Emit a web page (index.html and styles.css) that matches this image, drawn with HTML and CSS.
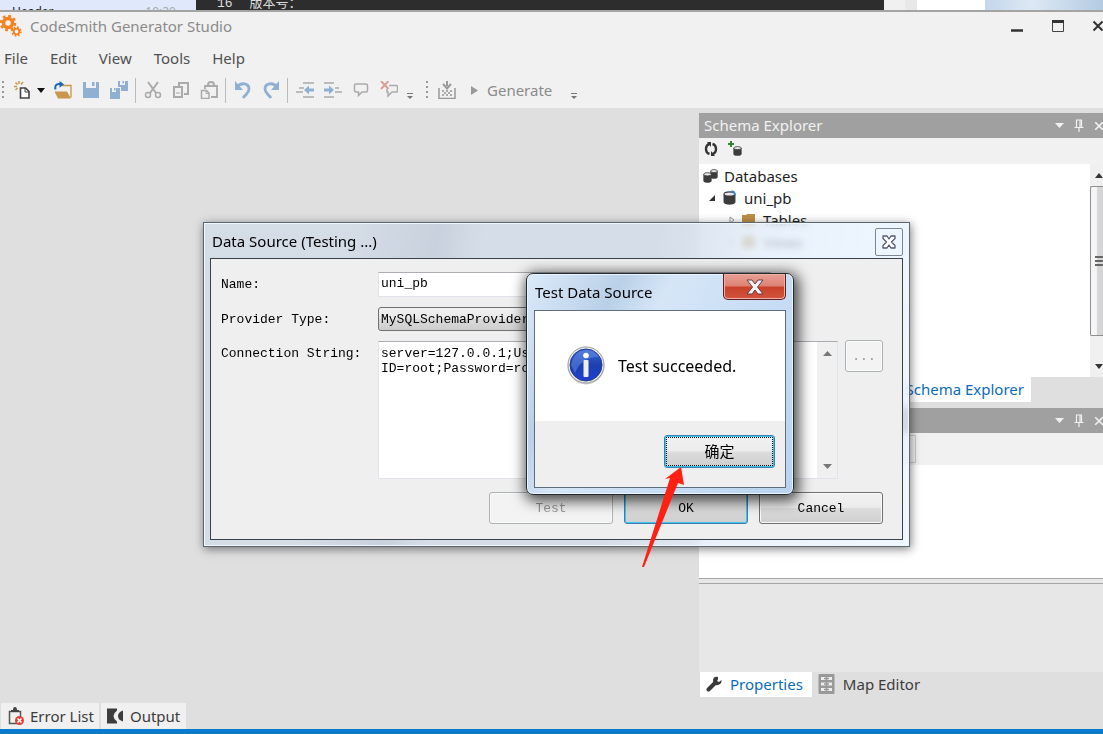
FILE: index.html
```html
<!DOCTYPE html>
<html lang="en">
<head>
<meta charset="utf-8">
<title>CodeSmith Generator Studio</title>
<link rel="stylesheet" href="styles.css">
</head>
<body>
<svg class="defs" aria-hidden="true">
  <symbol id="pin" viewBox="0 0 10 14"><path d="M2.500 1v7M2 1h6M6 1v7M7.500 1v7M0.500 8.500h9M5 9v4" fill="none" stroke="currentColor" stroke-width="1.200"/></symbol>
  <symbol id="cross" viewBox="0 0 12 12"><path d="M1.500 1.500l9 9M10.500 1.500l-9 9" fill="none" stroke="currentColor" stroke-width="2"/></symbol>
  <symbol id="drum" viewBox="0 0 12 12" preserveAspectRatio="none"><path d="M0.500 2.500v7c0 3 11 3 11 0v-7z" fill="#3c3c3c"/><ellipse cx="6" cy="2.500" rx="5" ry="1.800" fill="#e8e8e8" stroke="#3c3c3c"/></symbol>
  <symbol id="more" viewBox="0 0 8 8"><path d="M1 1.500h6" stroke="#777"/><path d="M1 4h6l-3 3z" fill="#777"/></symbol>
</svg>

<div class="backdrop">
  <div class="back-list"><span>Header</span><span class="back-time">10:20</span></div>
  <div class="back-code"><span class="line-no">16</span><span>版本号：</span></div>
  <div class="back-light"></div><div class="back-mid"></div><div class="back-white"></div><div class="back-glass"></div>
</div>

<header class="titlebar">
  <svg class="logo" viewBox="0 0 22 22">
    <g fill="none" stroke="#f5821f"><circle cx="8" cy="8" r="4.500" stroke-width="3.500"/><circle cx="8" cy="8" r="7" stroke-width="2.600" stroke-dasharray="2.750 2.750"/><circle cx="16.500" cy="16.500" r="2.800" stroke-width="1.800"/><circle cx="16.500" cy="16.500" r="4.300" stroke-width="1.800" stroke-dasharray="1.700 1.680"/></g>
  </svg>
  <h1>CodeSmith Generator Studio</h1>
  <div class="win-controls">
    <button aria-label="Minimize"><svg viewBox="0 0 14 14" width="14" height="14"><path d="M1 11.500h12" stroke="#333" stroke-width="2.500"/></svg></button>
    <button aria-label="Maximize"><svg viewBox="0 0 14 14" width="14" height="14"><path d="M1.500 1.500h11v11h-11z" fill="none" stroke="#444"/><path d="M1 2.500h12" stroke="#333" stroke-width="3"/></svg></button>
    <button aria-label="Close"><svg width="12" height="12" color="#333"><use href="#cross"/></svg></button>
  </div>
</header>

<nav class="menu">
  <button>File</button><button>Edit</button><button>View</button><button>Tools</button><button>Help</button>
</nav>

<div class="toolbar">
  <span class="grip first"></span>
  <button class="tool" aria-label="New"><svg viewBox="0 0 18 18"><path d="M6.500 7h5l3.500 3.500v6.500h-8.500z" fill="#fff" stroke="#444" stroke-width="1.600"/><path d="M11 7v4h4" fill="none" stroke="#444"/><path d="M5 0v3M1.500 1.500l2 2M0 5.500h3M9 1l-2 2.500M1.500 9l2-2" stroke="#c8964c" stroke-width="1.500"/></svg></button>
  <button class="drop" aria-label="New options"><svg viewBox="0 0 8 5" width="8" height="5"><path d="M0 0h8L4 5z" fill="#111"/></svg></button>
  <button class="tool" aria-label="Open"><svg viewBox="0 0 18 18"><path d="M8 4.500h9v12" fill="none" stroke="#c8964c" stroke-width="1.300"/><path d="M0.500 10.500h12.500l4 7h-13z" fill="#c8964c"/><path d="M1.500 8.500C0.500 3.500 3 2.500 7 3" fill="none" stroke="#1b66b0" stroke-width="2"/><path d="M5.500 0l4.500 3.200-4.500 3.500z" fill="#1b66b0"/></svg></button>
  <button class="tool" aria-label="Save"><svg viewBox="0 0 18 18"><path d="M1 1h3v6h10V1h3v16H1z" fill="#8fb0d0"/><path d="M5 1h8v5H5z" fill="#eef2f6"/><path d="M10 1h2.500v4H10z" fill="#8fb0d0"/></svg></button>
  <button class="tool" aria-label="Save all"><svg viewBox="0 0 18 18" fill="#8fb0d0"><path d="M8 0h2v4h5V0h3v10h-7V6H8z"/><path d="M12.500 0h1.500v2.500h-1.500z"/><path d="M0 7h2v4h4V7h4v11H0z"/><path d="M4 7h1.500v2.500H4z"/></svg></button>
  <span class="sep"></span>
  <button class="tool" aria-label="Cut"><svg viewBox="0 0 18 18" fill="none" stroke="#aaa"><path d="M4 1l8 11M14 1L6 12" stroke-width="2"/><circle cx="4" cy="14" r="2.500" stroke-width="1.500"/><circle cx="14" cy="14" r="2.500" stroke-width="1.500"/></svg></button>
  <button class="tool" aria-label="Copy"><svg viewBox="0 0 18 18" fill="none" stroke="#aaa" stroke-width="2"><path d="M7 5V2h9v11h-4"/><path d="M2 6h8v10H2z"/><path d="M4 12h4" stroke-width="1"/></svg></button>
  <button class="tool" aria-label="Paste"><svg viewBox="0 0 18 18" fill="none" stroke="#aaa"><path d="M5 8V5h12v11h-6" stroke-width="1.800"/><path d="M8 4c0-4 6-4 6 0" stroke-width="2"/><path d="M1.500 9.500h5L9 12v5.500H1.500z" stroke-width="1.500"/><path d="M6 9v3.500h3"/></svg></button>
  <span class="sep"></span>
  <button class="tool" aria-label="Undo"><svg viewBox="0 0 18 18"><path d="M3 6C7 1 15 2 15 8c0 4-3 5-6 9" fill="none" stroke="#8fb0d0" stroke-width="2.800"/><path d="M1 0v9h8z" fill="#8fb0d0"/></svg></button>
  <button class="tool" aria-label="Redo"><svg viewBox="0 0 18 18"><path d="M15 6C11 1 3 2 3 8c0 4 3 5 6 9" fill="none" stroke="#8fb0d0" stroke-width="2.800"/><path d="M17 0v9H9z" fill="#8fb0d0"/></svg></button>
  <span class="sep"></span>
  <button class="tool" aria-label="Outdent"><svg viewBox="0 0 18 18"><path d="M7 2h11M7 16h11M3 7h5M0 11h7" stroke="#aaa" stroke-width="1.700"/><path d="M8 9l5-4.500v3h5v3h-5v3z" fill="#8fb0d0"/></svg></button>
  <button class="tool" aria-label="Indent"><svg viewBox="0 0 18 18"><path d="M0 2h10M0 16h10M11 7h4M11 11h7" stroke="#aaa" stroke-width="1.700"/><path d="M10 9L5 4.500v3H0v3h5v3z" fill="#8fb0d0"/></svg></button>
  <button class="tool" aria-label="Comment"><svg viewBox="0 0 18 18"><path d="M4 3h10q1.500 0 1.500 1.500v5q0 1.500-1.500 1.500H10l-3.500 3.500V11H4Q2.500 11 2.500 9.500v-5Q2.500 3 4 3z" fill="none" stroke="#aaa" stroke-width="1.500"/></svg></button>
  <button class="tool" aria-label="Remove comment"><svg viewBox="0 0 18 18"><path d="M9 4.500h7.500q1 0 1 1v4.500q0 1-1 1H12l-4 4V11H7V8" fill="none" stroke="#aaa" stroke-width="1.500"/><path d="M1 0l7.500 8M8.500 0L1 8" stroke="#dc9e94" stroke-width="2"/></svg></button>
  <button class="overflow" aria-label="More edit tools"><svg width="8" height="8"><use href="#more"/></svg></button>
  <span class="grip"></span>
  <button class="tool" aria-label="Build"><svg viewBox="0 0 18 18"><path d="M1 7v10.500h16V7" fill="none" stroke="#999" stroke-width="1.500"/><path d="M9 0v5M5 3l4 4.500L13 3" fill="none" stroke="#999" stroke-width="2"/><path d="M4 10h2m2 0h2m2 0h2M6 12h2m2 0h2M4 14h2m2 0h2m2 0h2" stroke="#aaa" stroke-width="2"/></svg></button>
  <button class="generate"><svg viewBox="0 0 7 9" width="7" height="9"><path d="M0 0l7 4.500L0 9z" fill="#999"/></svg>Generate</button>
  <button class="overflow" aria-label="More build tools"><svg width="8" height="8"><use href="#more"/></svg></button>
</div>

<main class="workspace">
  <div class="canvas"></div>
  <aside class="dock">
    <section class="panel schema">
      <header class="panel-head"><h2>Schema Explorer</h2>
        <button aria-label="Panel menu"><svg viewBox="0 0 9 5" width="9" height="5"><path d="M0 0h9L4.500 5z" fill="currentColor"/></svg></button>
        <button aria-label="Pin"><svg width="10" height="14"><use href="#pin"/></svg></button>
        <button aria-label="Close panel"><svg width="10" height="10"><use href="#cross"/></svg></button>
      </header>
      <div class="panel-tools">
        <button aria-label="Refresh"><svg viewBox="0 0 14 14" width="14" height="14"><path d="M5.500 12Q2 11 2 7t3.500-5M8.500 2Q12 3 12 7t-3.500 5" fill="none" stroke="#333" stroke-width="2.400"/><path d="M3 0h4v5zM11 14H7V9z" fill="#333"/></svg></button>
        <button aria-label="Add data source"><svg viewBox="0 0 16 16" width="16" height="16"><path d="M4 0v6M1 3h6" stroke="#2c8a35" stroke-width="2"/><use href="#drum" x="6" y="5" width="9" height="10"/></svg></button>
      </div>
      <div class="tree-area">
        <ul class="tree">
          <li><svg viewBox="0 0 16 16" width="16" height="16"><use href="#drum" x="7" y="1" width="8" height="10"/><use href="#drum" x="0" y="4" width="9" height="11"/></svg>Databases</li>
          <li class="l1"><svg viewBox="0 0 8 8" width="8" height="8"><path d="M7 1v6H1z" fill="#333"/></svg><svg viewBox="0 0 16 16" width="16" height="16"><use href="#drum" x="1" y="1" width="13" height="14"/><path d="M9 2q3-2 4 3" fill="none" stroke="#3b83cc" stroke-width="2"/></svg>uni_pb</li>
          <li class="l2"><svg viewBox="0 0 6 8" width="6" height="8"><path d="M1 1l4 3-4 3z" fill="none" stroke="#999"/></svg><svg viewBox="0 0 16 16" width="16" height="16"><path d="M1 3h4l1-1h8v12H1z" fill="#be8f47"/></svg>Tables</li>
          <li class="l2"><svg viewBox="0 0 6 8" width="6" height="8"><path d="M1 1l4 3-4 3z" fill="none" stroke="#999"/></svg><svg viewBox="0 0 16 16" width="16" height="16"><path d="M1 3h4l1-1h8v12H1z" fill="#be8f47"/></svg>Views</li>
        </ul>
        <div class="tree-scroll">
          <svg viewBox="0 0 8 5" width="8" height="5"><path d="M0 5h8L4 0z" fill="#333"/></svg>
          <div class="thumb"><i></i><i></i><i></i></div>
          <svg viewBox="0 0 8 5" width="8" height="5"><path d="M0 0h8L4 5z" fill="#333"/></svg>
        </div>
      </div>
      <div class="tabs schema-tabs"><button class="tab active">Schema Explorer</button></div>
    </section>
    <section class="panel props">
      <header class="panel-head"><h2></h2>
        <button aria-label="Panel menu"><svg viewBox="0 0 9 5" width="9" height="5"><path d="M0 0h9L4.500 5z" fill="currentColor"/></svg></button>
        <button aria-label="Pin"><svg width="10" height="14"><use href="#pin"/></svg></button>
        <button aria-label="Close panel"><svg width="10" height="10"><use href="#cross"/></svg></button>
      </header>
      <div class="prop-tools"><div class="prop-box"></div></div>
      <div class="prop-grid"></div>
      <div class="prop-split"></div>
      <div class="prop-help"></div>
      <div class="tabs">
        <button class="tab active"><svg viewBox="0 0 16 16" width="16" height="16"><path d="M2.500 13.500L9 7" stroke="#3a3a3a" stroke-width="4" stroke-linecap="round"/><path d="M12 3.500V1Q7 0 7 5q1 5 5 4 4-1 3.500-5L13 6 11 5z" fill="#3a3a3a"/></svg>Properties</button>
        <button class="tab"><svg viewBox="0 0 17 20" width="17" height="20"><rect x="0.500" width="16" height="20" rx="1" fill="#999"/><path d="M3 3h11v3H3zM3 8.500h11v3H3zM3 14h11v3H3z" fill="#eee"/><path d="M6 4.500h5M6 10h5M6 15.500h5M8.500 3v14" stroke="#999" stroke-width="1.500"/></svg>Map Editor</button>
      </div>
    </section>
  </aside>
</main>

<footer class="bottom-tabs">
  <button><svg viewBox="0 0 16 18" width="16" height="18"><path d="M1.500 4.500h11v12h-11z" fill="none" stroke="#555" stroke-width="1.500"/><path d="M3 5V3h2q0-3 2-3t2 3h2v2z" fill="#444"/><circle cx="11.500" cy="13.500" r="4.500" fill="#dc4236"/><path d="M9.500 11.500l4 4m0-4l-4 4" stroke="#fff" stroke-width="1.500"/></svg>Error List</button>
  <button><svg viewBox="0 0 18 16" width="18" height="16"><path d="M1 0.500h10v2Q4 8 11 13.500v2H1z" fill="#3d3d3d"/><path d="M17 2.500v11Q12 12 12 8t5-5.500z" fill="#3d3d3d"/></svg>Output</button>
</footer>

<section class="source-dialog" role="dialog" aria-labelledby="source-title">
  <header><h2 id="source-title">Data Source (Testing ...)</h2>
    <button aria-label="Close data source"><svg viewBox="0 0 14 14" width="14" height="14"><path d="M1 1h4l2 3 2-3h4v2.500L9.500 7l3.500 3.500V13H9l-2-3-2 3H1v-2.500L4.500 7 1 3.500z" fill="#fff" stroke="#555970" stroke-width="1.300" stroke-linejoin="round"/></svg></button></header>
  <form class="source-form">
    <label for="name">Name:</label><input id="name" type="text" value="uni_pb">
    <label for="provider">Provider Type:</label><select id="provider"><option>MySQLSchemaProvider</option></select>
    <label for="connection">Connection String:</label>
    <div class="connection">
      <div class="text-wrap"><textarea id="connection" spellcheck="false">server=127.0.0.1;User
ID=root;Password=root</textarea>
        <div class="text-scroll"><svg viewBox="0 0 9 5" width="9" height="5"><path d="M0 5h9L4.500 0z" fill="#777"/></svg><svg viewBox="0 0 9 5" width="9" height="5"><path d="M0 0h9L4.500 5z" fill="#777"/></svg></div></div>
      <button type="button" class="browse" disabled>...</button>
    </div>
    <div class="actions"><button type="button" disabled>Test</button><button type="button" class="default">OK</button><button type="button">Cancel</button></div>
  </form>
</section>

<section class="message-dialog" role="alertdialog" aria-labelledby="message-title">
  <header><h2 id="message-title">Test Data Source</h2>
    <button aria-label="Close message"><svg viewBox="0 0 18 16" width="18" height="16"><path d="M1 1h5l3 4 3-4h5l-5.500 7L17 15h-5l-3-4-3 4H1l5.500-7z" fill="#f4f4f4" stroke="#6b3d42" stroke-linejoin="round"/></svg></button></header>
  <div class="message-body">
    <div class="message-text">
      <svg viewBox="0 0 40 40" width="40" height="40"><defs><linearGradient id="blue" x2="0" y2="1"><stop stop-color="#3a68d8"/><stop offset=".5" stop-color="#1c40ae"/><stop offset="1" stop-color="#1f3fd0"/></linearGradient></defs><circle cx="20" cy="20" r="18.500" fill="#999" opacity=".5"/><circle cx="20" cy="19" r="18" fill="#eee" stroke="#9a9a9a"/><circle cx="20" cy="19" r="16" fill="url(#blue)" stroke="#223a90"/><path d="M5 19Q8 5 20 4q9 0 13 7-18 0-24 16z" fill="#6f97ee" opacity=".45"/><circle cx="20" cy="9.500" r="2.800" fill="#fff"/><rect x="17.500" y="14" width="5" height="17" rx="1" fill="#eee"/></svg>
      <p>Test succeeded.</p>
    </div>
    <div class="message-actions"><button lang="zh-CN">确定</button></div>
  </div>
</section>

<svg class="arrow" viewBox="0 0 46 104" aria-hidden="true"><path d="M40 1l3 18-6-2L3 101l-2 0L29 12l-5 1z" fill="#ff2014"/></svg>
</body>
</html>
```
FILE: styles.css
```css
* { box-sizing: border-box; }
body {
  margin: 0;
  height: 100vh;
  position: relative;
  display: flex;
  flex-direction: column;
  overflow: hidden;
  background: #dfdfdf;
  color: #1e1e1e;
  font: 15px/22px "Noto Sans", "Noto Sans CJK SC", sans-serif;
}
button {
  margin: 0;
  padding: 0;
  border: 0;
  background: none;
  color: inherit;
  font: inherit;
}
svg { display: block; flex: none; }
h1, h2, p, ul { margin: 0; padding: 0; font: inherit; }
.defs { position: absolute; width: 0; height: 0; }

.backdrop { flex: none; display: flex; height: 12px; overflow: hidden; border-bottom: 2px solid #a4a4a4; }
.back-list { width: 196px; padding: 4px 20px 0 12px; background: #dfe9fb; font-size: 12px; line-height: 16px; display: flex; justify-content: space-between; }
.back-time { color: #aaa; }
.back-code { flex: 1; padding-left: 21px; background: #2d2d2d; color: #ddd; font: 13px/12px "Liberation Mono", "Noto Sans CJK SC", monospace; display: flex; align-items: flex-end; gap: 17px; }
.back-light { width: 21px; background: #f0f0f0; }
.back-mid { width: 12px; background: #e8e8e8; }
.back-white { width: 68px; background: #fff; }
.back-glass { width: 118px; background: linear-gradient(90deg, #c4d6ec, #dce8f4 40%, #b4cbe2); }

.titlebar { flex: none; display: flex; align-items: center; height: 31px; padding-bottom: 3px; background: #f1f1f1; color: #8b8b8b; }
.logo { width: 22px; height: 22px; margin-right: 8px; }
.titlebar h1 { flex: 1; }
.win-controls { display: flex; gap: 27px; margin-right: -1px; color: #333; }
.menu { flex: none; display: flex; gap: 22px; height: 31px; padding: 0 0 2px 4px; background: #f1f1f1; color: #505050; }
.toolbar { flex: none; display: flex; align-items: center; height: 34px; padding-bottom: 2px; background: #f1f1f1; color: #8b8b8b; }
.tool { width: 28px; height: 28px; display: grid; place-items: center; }
.tool svg { width: 18px; height: 18px; }
.drop { width: 12px; }
.sep { width: 6px; height: 25px; background: linear-gradient(#bbb, #bbb) 2px 0 / 1px 100% no-repeat; }
.grip { width: 16px; height: 18px; background: repeating-linear-gradient(#999 0 2px, transparent 2px 5px) 9px 0 / 2px 100% no-repeat; }
.grip.first { width: 9px; background-position-x: 2px; }
.overflow { width: 14px; padding: 12px 3px 0; }
.generate { display: flex; align-items: center; gap: 9px; padding: 0 15px 0 10px; }

.workspace { flex: 1; min-height: 0; display: flex; padding: 5px 0 6px; }
.canvas { flex: 1; }
.dock { width: 404px; display: flex; flex-direction: column; gap: 6px; }
.panel { display: flex; flex-direction: column; }
.panel-head { display: flex; align-items: center; gap: 10px; height: 25px; padding-left: 5px; margin-right: -1px; background: #a0a0a0; color: #f1f1f1; }
.panel-head h2 { flex: 1; padding-bottom: 2px; }
.panel-tools { display: flex; align-items: center; gap: 9px; height: 26px; padding: 0 5px 4px; background: #f1f1f1; }
.tree-area { display: flex; height: 213px; background: #fff; }
.tree { flex: 1; list-style: none; padding: 1px 0 0 4px; }
.tree li { display: flex; align-items: center; gap: 5px; height: 22px; }
.tree .l1 { padding-left: 5px; gap: 6px; }
.tree .l2 { padding-left: 26px; gap: 6px; }
.tree-scroll { width: 13px; display: flex; flex-direction: column; align-items: flex-end; background: #f0f0f0; padding: 9px 0 8px; gap: 8px; }
.thumb { flex: 1; width: 13px; margin-bottom: 20px; border: 1px solid #8f8f8f; border-right: 0; border-radius: 2px 0 0 2px; background: linear-gradient(90deg, #f5f5f5 0 45%, #d6d6d8 55%); display: flex; flex-direction: column; justify-content: center; gap: 2px; padding-left: 4px; }
.thumb i { height: 2px; background: #666; }
.tabs { display: flex; height: 25px; color: #3c3c3c; }
.schema-tabs { padding-left: 180px; }
.tab { display: flex; align-items: center; gap: 8px; padding: 0 7px 2px; }
.schema-tabs .tab { width: 152px; justify-content: flex-end; }
.tab.active { background: #fff; color: #0a6cbd; }
.props { flex: 1; }
.prop-tools { height: 32px; background: #f1f1f1; padding-top: 2px; }
.prop-box { width: 217px; height: 28px; border: 1px solid #ccc; }
.prop-grid { flex: 1; background: #fff; }
.prop-split { height: 6px; border: solid #a6a6a6; border-width: 1px 0; background: #e7e7e7; }
.prop-help { height: 88px; background: #e7e7e7; }
.props .tabs { padding-left: 1px; }
.props .tab { padding-left: 6px; padding-right: 9px; }

.bottom-tabs { flex: none; display: flex; gap: 2px; padding-left: 1px; height: 31px; border-bottom: 5px solid #087bcf; color: #3c3c3c; }
.bottom-tabs button { display: flex; align-items: center; gap: 6px; padding: 0 5px 0 7px; background: #f0f0f0; }
.bottom-tabs button + button { padding-right: 6px; padding-left: 5px; }

.source-dialog {
  position: absolute; left: 203px; top: 222px; width: 707px;
  padding: 0 6px 6px;
  border: 1px solid #5c6670;
  background: linear-gradient(100deg, rgba(211, 220, 230, .95) 0 20%, rgba(198, 208, 220, .95) 31%, rgba(212, 222, 233, .9) 37% 60%, rgba(226, 238, 251, .75) 75%, rgba(232, 243, 255, .7));
  box-shadow: inset 0 0 0 1px #f2f7fc, 1px 2px 9px rgba(0, 0, 0, .5);
  backdrop-filter: blur(3px);
  color: #000;
}
.source-dialog header { display: flex; justify-content: space-between; align-items: center; height: 35px; padding: 2px 0 0 2px; }
.source-dialog h2 { padding-bottom: 2px; }
.source-dialog header button { width: 28px; height: 28px; border: 1px solid #7d8794; border-radius: 2px; display: grid; place-items: center; }
.source-form {
  display: grid; grid-template-columns: 157px 1fr; row-gap: 10px;
  height: 282px; padding: 13px 19px 14px 10px;
  border: 1px solid #39424b; background: #efefef;
  grid-template-rows: 25px 24px 138px 1fr;
  font: 13px/15px "Liberation Mono", "Noto Sans CJK SC", monospace;
}
.source-form label { padding-top: 5px; }
.source-form input, .source-form select { width: 393px; border: 1px solid #e2e3ea; border-top-color: #abadb3; padding: 0 2px 2px; font: inherit; background: #fff; color: #000; }
.source-form select { appearance: none; border: 1px solid #707070; border-radius: 3px; background: linear-gradient(#f1f1f1, #e8e8e8 49%, #dadada 51%, #cecece); padding: 0 2px; }
.connection { display: flex; gap: 7px; }
.text-wrap { width: 460px; display: flex; border: 1px solid #e2e3ea; border-top-color: #abadb3; background: #fff; }
.text-wrap textarea { flex: 1; resize: none; border: 0; padding: 4px 2px; outline: 0; background: none; font: inherit; color: #000; }
.text-scroll { width: 20px; padding: 9px 0; background: #f0f0f0; display: flex; flex-direction: column; justify-content: space-between; align-items: center; }
.source-form button { height: 32px; border: 1px solid #707070; border-radius: 3px; box-shadow: inset 0 0 0 1px #fafafa; background: linear-gradient(#f2f2f2, #ebebeb 49%, #dcdcdc 51%, #cfcfcf); }
.source-form button:disabled { border-color: #adb2b5; background: #f3f3f3; color: #979797; }
.source-form .browse { width: 38px; flex: none; margin-top: -1px; }
.actions { grid-column: 2; display: flex; justify-content: flex-end; gap: 11px; padding-top: 3px; }
.actions button { width: 124px; flex: none; }
.source-form .default { border-color: #3c7fb1; box-shadow: inset 0 0 0 1px #3fc6ef; background: linear-gradient(#e6e6e6, #cfcfcf); }

.message-dialog {
  position: absolute; left: 526px; top: 273px; width: 268px;
  padding: 0 7px 6px;
  border: 1px solid #252a30; border-radius: 7px;
  background: linear-gradient(120deg, #dceafa 0, #bad0e8 25%, #d6e6f7 38%, #cadff5 60%, #b9d3ef);
  box-shadow: inset 0 0 0 1px #eaf4fe, 2px 3px 14px 3px rgba(0, 0, 0, .7);
  color: #000;
}
.message-dialog header { display: flex; justify-content: space-between; height: 36px; padding-left: 1px; }
.message-dialog h2 { padding-top: 7px; }
.message-dialog header button { width: 63px; height: 26px; border: 1px solid #5d1f22; border-top: 0; border-radius: 0 0 5px 5px; box-shadow: inset 0 0 0 1px #efb0a5; background: linear-gradient(#e8a094, #dd8274 48%, #c8402a 52%, #d2553e); display: grid; place-items: center; }
.message-body { border: 1px solid #5f6d7c; background: #efefef; }
.message-text { display: flex; align-items: center; gap: 12px; height: 110px; padding-left: 31px; background: #fff; font-size: 16px; }
.message-actions { display: flex; justify-content: flex-end; height: 66px; padding: 14px 10px 0 0; }
.message-actions button { width: 111px; height: 33px; padding: 0 0 2px; border: 1px solid #3c7fb1; border-radius: 3px; box-shadow: inset 0 0 0 1px #3fc6ef; background: linear-gradient(#f2f2f2, #ebebeb 49%, #dcdcdc 51%, #cfcfcf); outline: 1px dotted #111; outline-offset: -3px; }
.arrow { position: absolute; left: 641px; top: 466px; width: 46px; height: 104px; }
```
